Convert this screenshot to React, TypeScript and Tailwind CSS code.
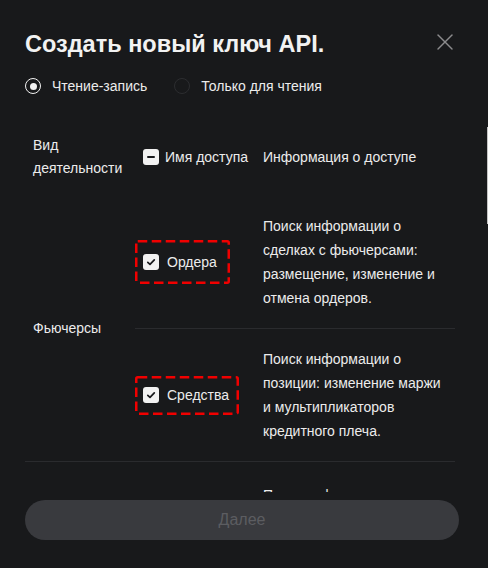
import { X } from "lucide-react";

const Box = ({ minus }: { minus?: boolean }) => (
  <span className="flex h-4 w-4 shrink-0 items-center justify-center rounded-[3px] bg-[#f2f2f2]">
    {minus ? (
      <span className="h-[2px] w-2 rounded-sm bg-[#18191c]" />
    ) : (
      <svg width="10" height="10" viewBox="0 0 10 10" fill="none">
        <path d="M1.8 5.3 4 7.4 8.3 2.8" stroke="#18191c" strokeWidth="1.7" strokeLinecap="round" strokeLinejoin="round" />
      </svg>
    )}
  </span>
);

interface MarkedProps {
  label: string;
  w: number;
  h: number;
  className: string;
}

// red dashed annotation round a checkbox
const Marked = ({ label, w, h, className }: MarkedProps) => (
  <div className={`relative flex items-center gap-2 pl-2 ${className}`}>
    <svg className="pointer-events-none absolute inset-0" width={w} height={h} fill="none">
      <rect x="1.25" y="1.25" width={w - 2.5} height={h - 2.5} rx="1.5" stroke="#f00000" strokeWidth="2.5" strokeDasharray="9.5 4.5" />
    </svg>
    <Box />
    <span className="text-[14px] leading-6 text-[#ececec]">{label}</span>
  </div>
);

const Desc = ({ lines }: { lines: string[] }) => (
  <div className="text-[14px] leading-6 text-[#ececec]">
    {lines.map((l) => (
      <div key={l} className="whitespace-nowrap">{l}</div>
    ))}
  </div>
);

export default function App() {
  return (
    <div className="relative flex h-[568px] w-[488px] flex-col bg-[#18191b] pt-7 font-['Liberation_Sans',Arial,sans-serif] text-[#ececec]">
      <div className="ml-[25px] mr-[33px] flex items-start justify-between">
        <h1 className="text-[23.5px] font-bold leading-8 text-[#f2f2f2]">Создать новый ключ API.</h1>
        <button className="-mr-1 flex h-7 w-7 items-center justify-center text-[#8b8b8d]">
          <X size={28} strokeWidth={1.2} />
        </button>
      </div>

      <div className="ml-[25px] mt-[14px] flex h-6 items-center text-[14px]">
        <span className="flex h-4 w-4 items-center justify-center rounded-full border-[1.5px] border-[#f2f2f2]">
          <span className="h-[7px] w-[7px] rounded-full bg-[#f2f2f2]" />
        </span>
        <span className="ml-[11px]">Чтение-запись</span>
        <span className="ml-[27px] h-4 w-4 rounded-full border-[1.5px] border-[#2c2d30]" />
        <span className="ml-[11px]">Только для чтения</span>
      </div>

      <div className="relative mt-[27px] h-[367px] overflow-hidden">
        <div className="absolute right-0 top-[2px] h-[97px] w-px bg-[#c4c4c4]" />
        <div className="ml-[25px] w-[430px]">
          <div className="grid grid-cols-[110px_128px_192px] items-center pb-[15px] pt-[9px] text-[14px]">
            <div className="pl-2 leading-[23px]">
              <div>Вид</div>
              <div>деятельности</div>
            </div>
            <div className="flex items-center gap-[6px] pl-2">
              <Box minus />
              <span>Имя доступа</span>
            </div>
            <div className="whitespace-nowrap">Информация о доступе</div>
          </div>

          <div className="flex border-b border-[#2a2b2e]">
            <div className="flex w-[110px] items-center pl-2 text-[14px]">Фьючерсы</div>
            <div className="flex w-[320px] flex-col">
              <div className="grid h-[134px] grid-cols-[128px_192px] items-center border-b border-[#2a2b2e]">
                <Marked label="Ордера" w={95} h={44} className="h-[44px] w-[95px]" />
                <Desc lines={["Поиск информации о", "сделках с фьючерсами:", "размещение, изменение и", "отмена ордеров."]} />
              </div>
              <div className="grid h-[132px] grid-cols-[128px_192px] items-center">
                <Marked label="Средства" w={104} h={39} className="h-[39px] w-[104px]" />
                <Desc lines={["Поиск информации о", "позиции: изменение маржи", "и мультипликаторов", "кредитного плеча."]} />
              </div>
            </div>
          </div>

          <div className="flex">
            <div className="flex w-[110px] items-center pl-2 text-[14px]">Спот</div>
            <div className="grid w-[320px] grid-cols-[128px_192px] items-start pt-[21px]">
              <div />
              <Desc lines={["Поиск информации о", "сделках на споте:", "размещение, изменение и", "отмена ордеров."]} />
            </div>
          </div>
        </div>
      </div>

      <button className="ml-[25px] mt-2 flex h-10 w-[434px] items-center justify-center rounded-full bg-[#393a3e] text-[16px] text-[#5c5d61]">
        Далее
      </button>
    </div>
  );
}
